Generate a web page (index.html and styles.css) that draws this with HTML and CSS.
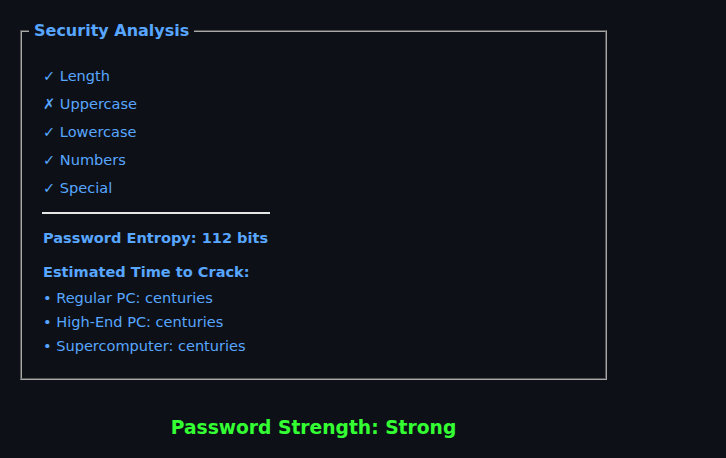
FILE: index.html
```html
<!DOCTYPE html>
<html>
<head>
<meta charset="utf-8">
<link rel="stylesheet" href="styles.css">
</head>
<body>
<div class="wrap">
  <fieldset class="panel">
    <legend class="panel-title">Security Analysis</legend>
    <div class="content">
      <ul class="checks">
        <li>✓ Length</li>
        <li>✗ Uppercase</li>
        <li>✓ Lowercase</li>
        <li>✓ Numbers</li>
        <li>✓ Special</li>
      </ul>
      <div class="divider"></div>
      <p class="entropy">Password Entropy: 112 bits</p>
      <p class="crack-title">Estimated Time to Crack:</p>
      <ul class="crack">
        <li>• Regular PC: centuries</li>
        <li>• High-End PC: centuries</li>
        <li>• Supercomputer: centuries</li>
      </ul>
    </div>
  </fieldset>
  <div class="strength">Password Strength: Strong</div>
</div>
</body>
</html>
```

FILE: styles.css
```css
html, body {
  margin: 0;
  background: #0d1117;
}
body {
  padding: 20px;
  font-family: "DejaVu Sans", sans-serif;
  color: #58a6ff;
}
.wrap {
  width: 587px;
}
.panel {
  margin: 0;
  border: 2px groove #a8a8a8;
  padding: 0 6px 20px 7px;
}
.panel-title {
  padding: 0 5px;
  font-size: 16px;
  font-weight: bold;
  line-height: 22px;
}
.content {
  padding: 0 14px;
}
.checks, .crack {
  list-style: none;
  margin: 0;
  padding: 0;
}
.checks {
  padding-top: 20px;
}
.checks li {
  font-size: 14.55px;
  line-height: 28px;
}
.divider {
  width: 228px;
  height: 2px;
  background: #e6e6e6;
  margin: 10px 0 0 -1px;
}
.entropy {
  margin: 15px 0 0;
  font-size: 14.55px;
  font-weight: bold;
  line-height: 18px;
}
.crack-title {
  margin: 16px 0 0;
  font-size: 14.55px;
  font-weight: bold;
  line-height: 18px;
}
.crack li {
  font-size: 14.55px;
  line-height: 24px;
}
.crack li .dot {
  margin-right: 1px;
}
.crack {
  margin-top: 5px;
}
.strength {
  text-align: center;
  color: #33ff33;
  font-weight: bold;
  font-size: 18.7px;
  margin-top: 37px;
}
```
